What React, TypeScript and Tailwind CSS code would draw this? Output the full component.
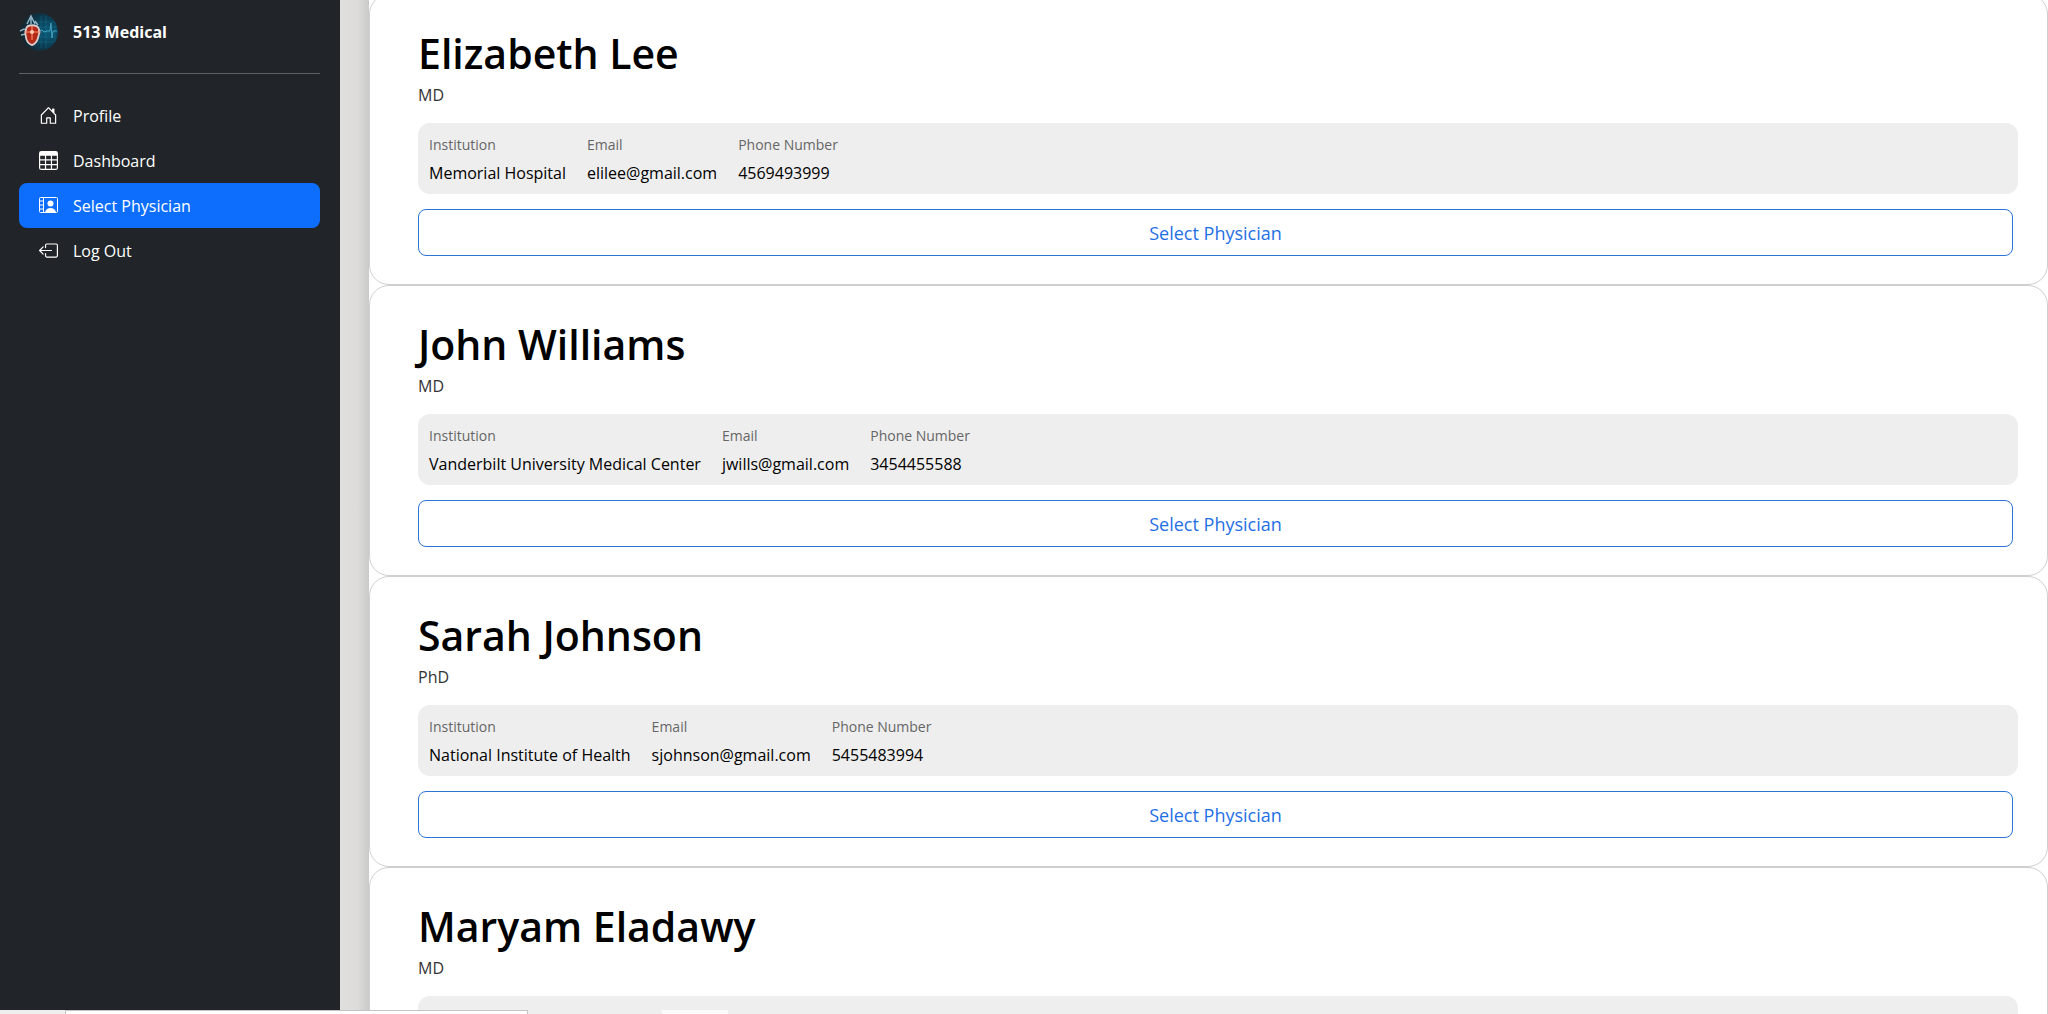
import { BsHouseDoor, BsTable, BsBoxArrowLeft } from "react-icons/bs";

interface Physician {
  name: string;
  title: string;
  contact?: {
    institution: string;
    email: string;
    phone: string;
  };
}

const physicians: Physician[] = [
  {
    name: "Elizabeth Lee",
    title: "MD",
    contact: { institution: "Memorial Hospital", email: "elilee@gmail.com", phone: "4569493999" },
  },
  {
    name: "John Williams",
    title: "MD",
    contact: { institution: "Vanderbilt University Medical Center", email: "jwills@gmail.com", phone: "3454455588" },
  },
  {
    name: "Sarah Johnson",
    title: "PhD",
    contact: { institution: "National Institute of Health", email: "sjohnson@gmail.com", phone: "5455483994" },
  },
  { name: "Maryam Eladawy", title: "MD" },
];

// Video tile with a film strip on its left side
function PhysicianIcon() {
  return (
    <svg viewBox="0 0 19 19" className="size-[19px]" fill="none" stroke="currentColor" aria-hidden="true">
      <rect x="0.5" y="1.5" width="18" height="15" rx="1" />
      <path d="M4.500 1.500v15M0.500 5h4M0.500 9h4M0.500 13h4" />
      <circle cx="11.500" cy="7.500" r="3" fill="currentColor" stroke="none" />
      <path d="M6 16.500c.5-3 2.500-4.500 5.500-4.500s5 1.500 5.500 4.500z" fill="currentColor" stroke="none" />
    </svg>
  );
}

function Logo() {
  return (
    <svg viewBox="0 0 40 40" className="size-10" aria-hidden="true">
      <defs>
        <radialGradient id="globe" cx="0.7" cy="0.5" r="0.65">
          <stop offset="0" stopColor="#0c5a78" />
          <stop offset="0.6" stopColor="#0b3c52" />
          <stop offset="1" stopColor="#15262f" />
        </radialGradient>
      </defs>
      <circle cx="20" cy="20" r="19" fill="url(#globe)" />
      <path
        d="M19 10h17M18 15h20M20 20h19M20 25h18M18 30h17M22 4v32M27 4v32M36 10v20"
        stroke="#1d86a6"
        strokeWidth="0.6"
        opacity="0.5"
      />
      <path d="M20 19l3-1 2 2 3-1h3l1-8 1 15 1-7h4" fill="none" stroke="#4fb3d0" strokeWidth="0.8" />
      <path d="M1 19l4-2 3 2M2 23l5-1M8 12l4-8 4 8M12 5v7M16 9l3 4" fill="none" stroke="#8fb3c4" strokeWidth="1.500" />
      <path d="M7 17c1-5 11-5 13 0 1 6-2 15-7 16-5-1-8-9-6-16z" fill="#b32a18" stroke="#d8cccc" strokeWidth="1.800" />
      <path d="M13 14v14M5 20h17" stroke="#ff8a66" strokeWidth="1.200" />
      <circle cx="13" cy="20" r="2" fill="#ffc9b0" />
    </svg>
  );
}

const navItems = [
  { label: "Profile", icon: <BsHouseDoor className="size-[19px]" /> },
  { label: "Dashboard", icon: <BsTable className="size-[19px]" /> },
  { label: "Select Physician", icon: <PhysicianIcon />, active: true },
  { label: "Log Out", icon: <BsBoxArrowLeft className="size-[19px]" /> },
];

function Sidebar() {
  return (
    <aside className="w-[340px] shrink-0 bg-[#212529] pt-3 pr-5 pl-[19px] text-white">
      <a href="#" className="flex h-10 items-center gap-[14px]">
        <Logo />
        <span className="text-base font-bold">513 Medical</span>
      </a>
      <hr className="mt-[21px] mb-[19px] border-[#5f6265]" />
      <nav>
        {navItems.map((item) => (
          <a
            key={item.label}
            href="#"
            className={`flex h-[45px] items-center gap-[15px] rounded-lg px-5 text-base ${item.active ? "bg-[#0d6efd]" : ""}`}
          >
            {item.icon}
            {item.label}
          </a>
        ))}
      </nav>
    </aside>
  );
}

function Field({ label, value }: { label: string; value: string }) {
  return (
    <div>
      <dt className="text-sm leading-6 text-[#666]">{label}</dt>
      <dd className="text-base leading-8 text-black">{value}</dd>
    </div>
  );
}

function PhysicianCard({ name, title, contact }: Physician) {
  return (
    <section className="rounded-[20px] border border-[#cfcfcf] bg-white pt-[30px] pr-[29px] pb-7 pl-12">
      <h2 className="text-[41px] leading-[56px] font-semibold text-black">{name}</h2>
      <p className="text-base leading-7 text-[#333]">{title}</p>
      <dl className="mt-[14px] flex h-[71px] gap-[21px] rounded-xl bg-[#eee] px-[11px] py-[10px]">
        {contact && (
          <>
            <Field label="Institution" value={contact.institution} />
            <Field label="Email" value={contact.email} />
            <Field label="Phone Number" value={contact.phone} />
          </>
        )}
      </dl>
      {contact && (
        <div className="mt-[15px] pr-[5px]">
          <button
            type="button"
            className="h-[47px] w-full rounded-lg border border-[#2b74d8] text-lg text-[#1f6fe5]"
          >
            Select Physician
          </button>
        </div>
      )}
    </section>
  );
}

// Thin strip that overlaps the bottom of the page
function StatusStrip() {
  return (
    <div className="absolute inset-x-0 bottom-0 flex h-1">
      <div className="w-[65px] bg-[#eee]" />
      <div className="w-[463px] border-t border-r border-l border-[#c4c4c4] bg-white" />
      <div className="ml-[134px] w-[66px] bg-[#fafafa]" />
    </div>
  );
}

export default function App() {
  return (
    <div className="relative flex h-screen overflow-hidden bg-white font-['Open_Sans','Noto_Sans',sans-serif]">
      <Sidebar />
      <div className="w-[29px] shrink-0 bg-linear-to-r from-[#dfdfde] via-[#dddcdb] via-60% to-[#cacaca]" />
      <main className="min-w-0 flex-1 overflow-hidden">
        <div className="-mt-[6px]">
          {physicians.map((physician) => (
            <PhysicianCard key={physician.name} {...physician} />
          ))}
        </div>
      </main>
      <StatusStrip />
    </div>
  );
}
